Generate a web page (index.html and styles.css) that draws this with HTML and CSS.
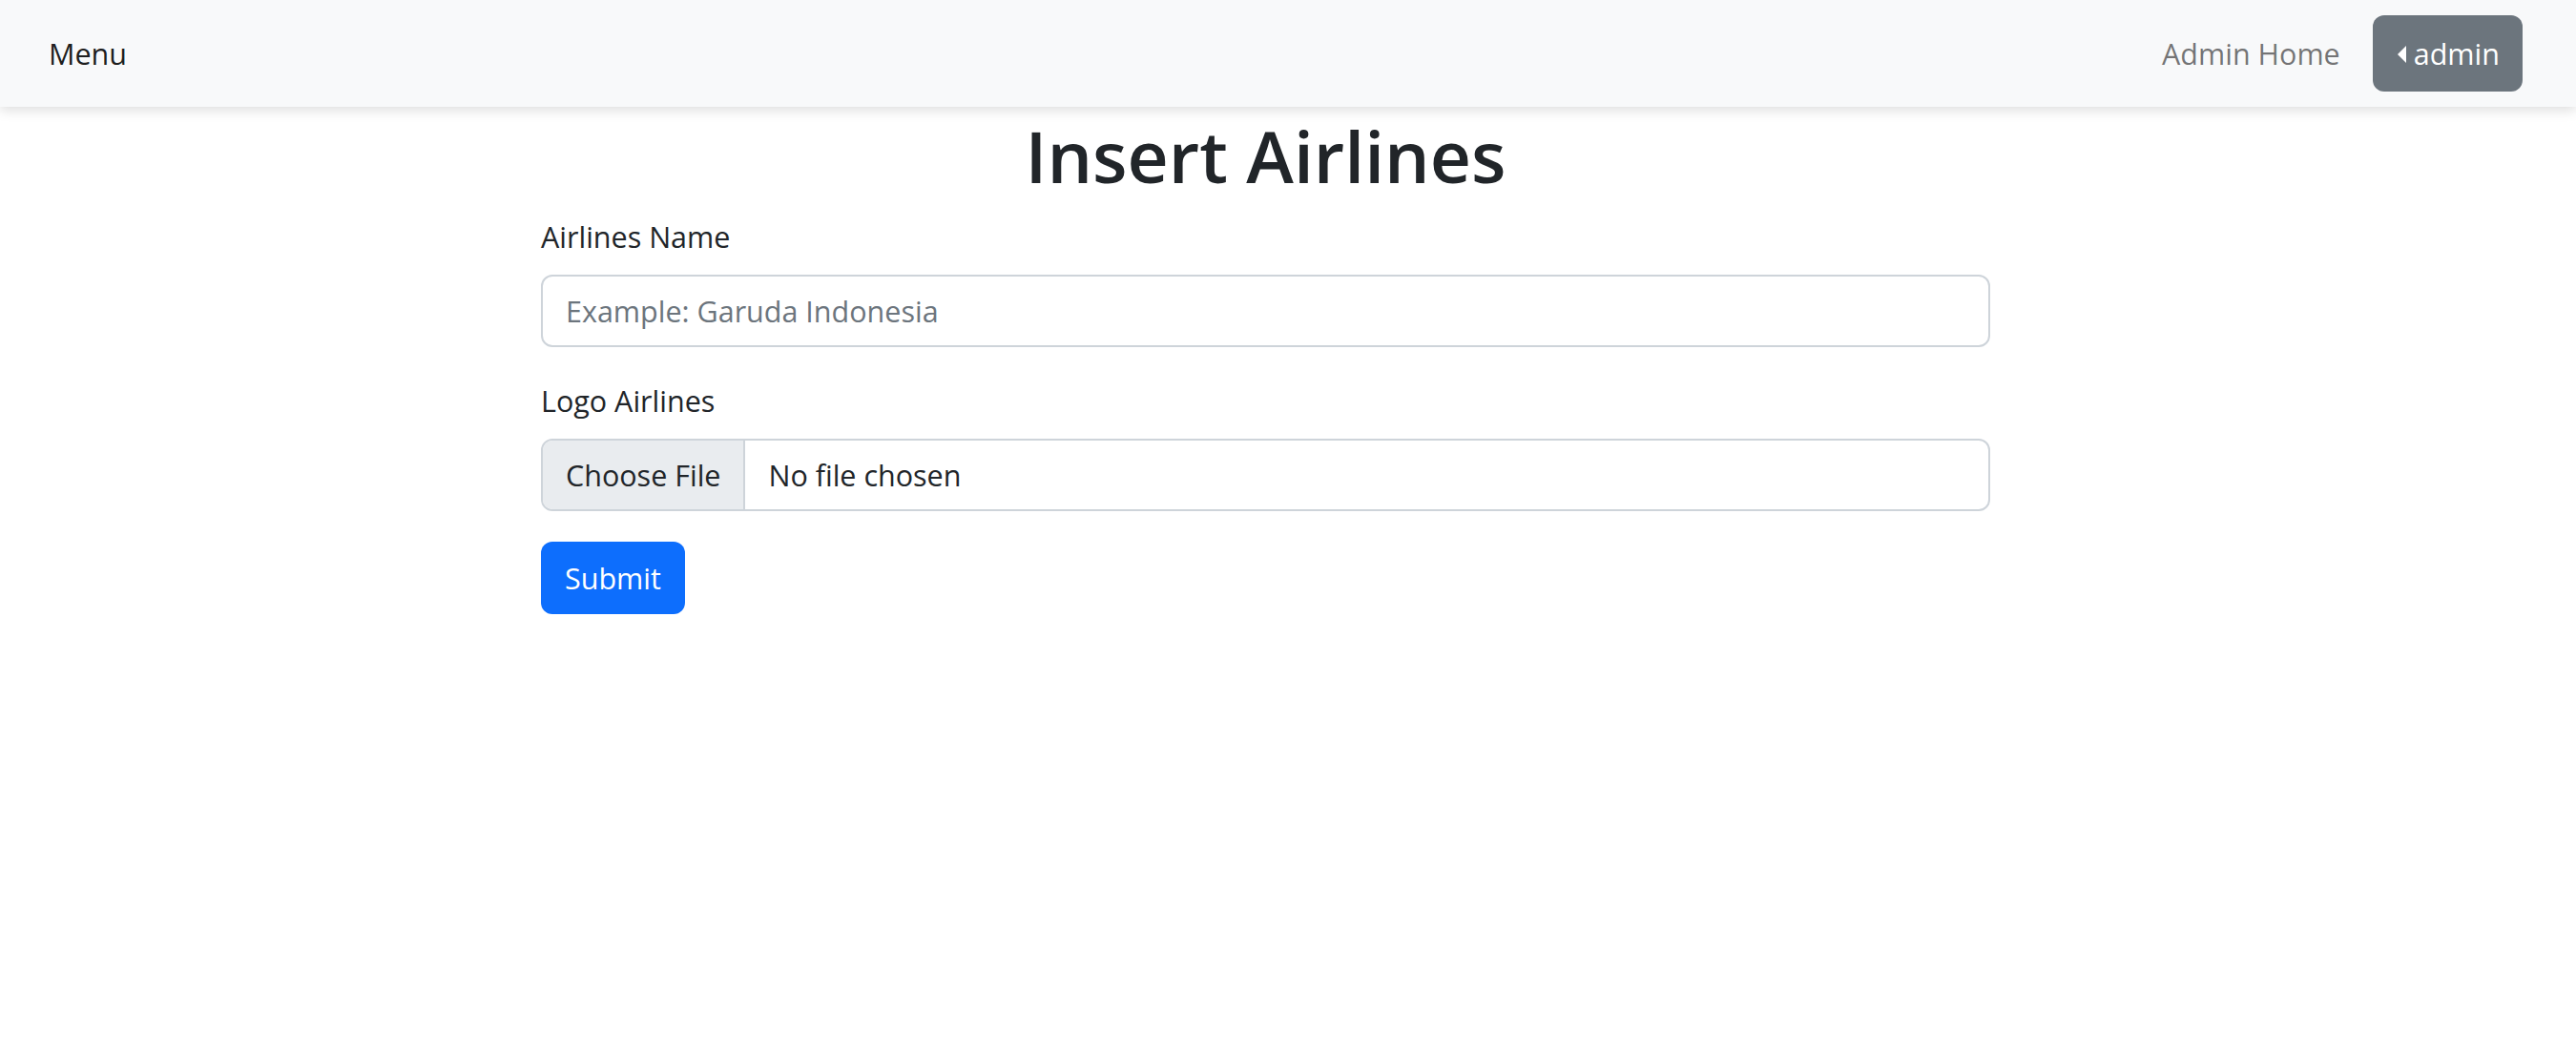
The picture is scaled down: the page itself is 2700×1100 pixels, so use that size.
FILE: index.html
```html
<!DOCTYPE html>
<html lang="en">
<head>
<meta charset="utf-8">
<title>Insert Airlines</title>
<link rel="stylesheet" href="styles.css">
</head>
<body>
<nav class="navbar">
  <a class="brand" href="#">Menu</a>
  <div class="nav-right">
    <a class="nav-link" href="#">Admin Home</a>
    <button class="btn-admin" type="button"><span class="caret"></span>admin</button>
  </div>
</nav>
<main class="content">
  <h1 class="title">Insert Airlines</h1>
  <form class="form">
    <div class="field">
      <label class="label" for="name">Airlines Name</label>
      <input class="control" id="name" type="text" placeholder="Example: Garuda Indonesia">
    </div>
    <div class="field">
      <label class="label">Logo Airlines</label>
      <div class="file-control">
        <span class="file-btn">Choose File</span>
        <span class="file-name">No file chosen</span>
      </div>
    </div>
    <button class="btn-submit" type="button">Submit</button>
  </form>
</main>
</body>
</html>
```
FILE: styles.css
```css
* { box-sizing: border-box; }
body {
  margin: 0;
  font-family: "Open Sans", "Noto Sans", sans-serif;
  font-size: 30.5px;
  line-height: 48px;
  color: #212529;
  background: #fff;
}
.navbar {
  height: 112px;
  background: #f8f9fa;
  box-shadow: 0 4px 12px rgba(0,0,0,0.13);
  display: flex;
  align-items: center;
  justify-content: space-between;
  padding: 0 56px 0 51px;
  position: relative;
}
.brand {
  color: rgba(0,0,0,0.9);
  text-decoration: none;
}
.nav-right {
  display: flex;
  align-items: center;
  gap: 18px;
}
.nav-link {
  color: rgba(0,0,0,0.55);
  text-decoration: none;
  padding: 0 16px;
}
.btn-admin {
  height: 80px;
  padding: 0 24px 0 26px;
  background: #6c757d;
  border: 0;
  border-radius: 12px;
  color: #fff;
  font: inherit;
  display: flex;
  align-items: center;
}
.caret {
  width: 0;
  height: 0;
  border-top: 9px solid transparent;
  border-bottom: 9px solid transparent;
  border-right: 9px solid #fff;
  margin-right: 8px;
  margin-top: 2px;
}
.content {
  width: 1519px;
  margin-left: 567px;
}
.title {
  margin: 3px 0 13px;
  font-size: 75px;
  line-height: 96px;
  font-weight: 600;
  text-align: center;
}
.field { margin-bottom: 32px; }
.label {
  display: block;
  margin-bottom: 16px;
}
.control {
  display: block;
  width: 100%;
  height: 76px;
  padding: 0 24px;
  border: 2px solid #ced4da;
  border-radius: 12px;
  font: inherit;
  color: #212529;
}
.control::placeholder { color: #6c757d; }
.file-control {
  display: flex;
  height: 76px;
  border: 2px solid #ced4da;
  border-radius: 12px;
  overflow: hidden;
}
.file-btn {
  display: flex;
  align-items: center;
  padding: 0 24px;
  background: #e9ecef;
  border-right: 2px solid #ced4da;
}
.file-name {
  display: flex;
  align-items: center;
  padding: 0 24px;
}
.btn-submit {
  height: 76px;
  padding: 0 25px;
  background: #0d6efd;
  border: 0;
  border-radius: 12px;
  color: #fff;
  font: inherit;
}
```
